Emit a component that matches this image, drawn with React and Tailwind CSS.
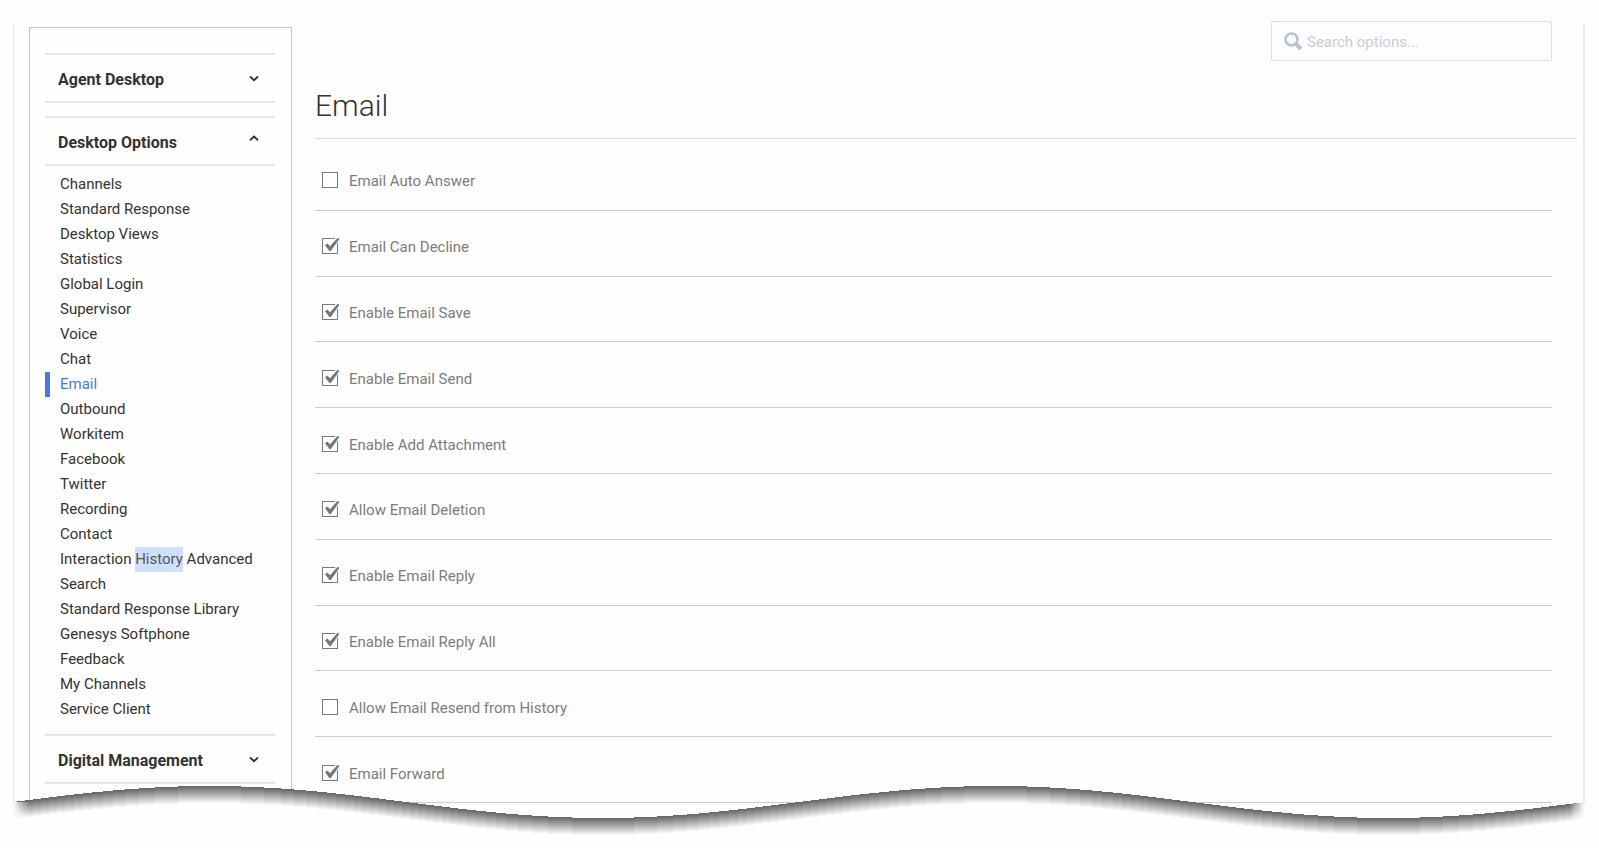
import React, { useState } from "react";

const sections = [
  { title: "Agent Desktop", items: [] },
  {
    title: "Desktop Options",
    items: [
      "Channels",
      "Standard Response",
      "Desktop Views",
      "Statistics",
      "Global Login",
      "Supervisor",
      "Voice",
      "Chat",
      "Email",
      "Outbound",
      "Workitem",
      "Facebook",
      "Twitter",
      "Recording",
      "Contact",
      "Interaction History Advanced Search",
      "Standard Response Library",
      "Genesys Softphone",
      "Feedback",
      "My Channels",
      "Service Client",
    ],
  },
  { title: "Digital Management", items: [] },
];

const emailOptions = [
  { label: "Email Auto Answer", checked: false },
  { label: "Email Can Decline", checked: true },
  { label: "Enable Email Save", checked: true },
  { label: "Enable Email Send", checked: true },
  { label: "Enable Add Attachment", checked: true },
  { label: "Allow Email Deletion", checked: true },
  { label: "Enable Email Reply", checked: true },
  { label: "Enable Email Reply All", checked: true },
  { label: "Allow Email Resend from History", checked: false },
  { label: "Email Forward", checked: true },
];

function Highlight({ text, word }) {
  if (!text.includes(word)) return text;
  return text.split(" ").map((part) => (
    <React.Fragment key={part}>
      {part === word ? (
        <mark className="inline-block bg-[#cfe0ff] align-top text-[#555]">{part}</mark>
      ) : (
        part
      )}{" "}
    </React.Fragment>
  ));
}

function Chevron({ up }) {
  return (
    <svg
      width="10"
      height="7"
      viewBox="0 0 10 7"
      fill="none"
      stroke="#333"
      strokeWidth="1.9"
      className={up ? "mb-[10px]" : "mb-1"}
    >
      <path d={up ? "M1 5.2 5 1.5 9 5.2" : "M1 1.5 5 5.2 9 1.5"} />
    </svg>
  );
}

function SidebarSection({ title, items, active, onSelect }) {
  const [open, setOpen] = useState(items.length > 0);

  return (
    <section>
      <button
        type="button"
        onClick={() => setOpen(!open)}
        aria-expanded={open}
        className="flex h-[50px] w-full items-center justify-between border-y-2 border-[#e2e7ef] pr-4 pl-[13px] pt-1 text-left text-base font-bold text-[#333]"
      >
        {title}
        <Chevron up={open} />
      </button>
      {open && items.length > 0 && (
        <ul className="-mb-px pt-[6px]">
          {items.map((item) => (
            <li key={item}>
              <a
                href="#"
                onClick={() => onSelect(item)}
                className={
                  item === active
                    ? "block border-l-[5px] border-[#4a79dd] pr-2 pl-[10px] text-[#4a79dd]"
                    : "block border-l-[5px] border-transparent pr-2 pl-[10px] text-[#333]"
                }
              >
                <Highlight text={item} word="History" />
              </a>
            </li>
          ))}
        </ul>
      )}
    </section>
  );
}

function OptionRow({ id, label, defaultChecked }) {
  const [checked, setChecked] = useState(defaultChecked);

  return (
    <div className="flex items-center border-b border-[#ccc] pl-[7px]">
      <span className="relative mt-[6px] h-4 w-[18px]">
        <input
          id={id}
          type="checkbox"
          checked={checked}
          onChange={(e) => setChecked(e.target.checked)}
          className="block h-4 w-4 appearance-none border border-[#7a7a7a] bg-white"
        />
        {checked && (
          <svg
            viewBox="0 0 18 16"
            className="pointer-events-none absolute inset-0 h-4 w-[18px]"
          >
            <path d="M13 0H17V5.5L15 5z" fill="#fefefe" />
            <path d="M3 7.2 5.4 5.4 8 8.2 15.4 0 17.6.8 8.8 13H7.4z" fill="#777" />
          </svg>
        )}
      </span>
      <label htmlFor={id} className="mt-[9px] pl-[9px] text-[#7c7c7c]">
        {label}
      </label>
    </div>
  );
}

// Torn bottom edge of the page with its drop shadow
const EDGE_WIDTH = 1572;
const SHADOW_DEPTH = 17;

function wave(offset) {
  const points = [];
  for (let x = 0; x <= EDGE_WIDTH; x += 4) {
    const y = 16 - 16 * Math.sin((x / EDGE_WIDTH) * Math.PI * 4) + offset;
    points.push(`${x} ${y.toFixed(2)}`);
  }
  return `M${points.join("L")}V62H0Z`;
}

function TornEdge() {
  const layers = Array.from({ length: SHADOW_DEPTH + 1 }, (_, i) => {
    const shade = Math.round(104 + (150 * i) / SHADOW_DEPTH);
    return { d: wave(i), fill: `rgb(${shade},${shade},${shade})` };
  });

  return (
    <svg
      viewBox={`0 0 ${EDGE_WIDTH} 62`}
      preserveAspectRatio="none"
      className="pointer-events-none absolute bottom-0 left-0 h-[62px] w-full"
      aria-hidden="true"
    >
      <defs>
        <linearGradient id="fadeLeft">
          <stop offset="0" stopColor="#fefefe" />
          <stop offset="1" stopColor="#fefefe" stopOpacity="0" />
        </linearGradient>
        <linearGradient id="fadeRight">
          <stop offset="0" stopColor="#fefefe" stopOpacity="0" />
          <stop offset="1" stopColor="#fefefe" />
        </linearGradient>
      </defs>
      {layers.map((layer, i) => (
        <path key={i} d={layer.d} fill={layer.fill} shapeRendering="crispEdges" />
      ))}
      <rect x="0" y="16" width="16" height="46" fill="url(#fadeLeft)" />
      <rect x="1556" y="16" width="16" height="46" fill="url(#fadeRight)" />
    </svg>
  );
}

export default function App() {
  const [active, setActive] = useState("Email");

  return (
    <div className="bg-[#fefefe] pr-[14px] pl-[13px] font-[Roboto,sans-serif] text-[15px] leading-[25px]">
      <div className="relative flex max-h-[848px] overflow-hidden pl-4">
        <div className="absolute top-6 bottom-[46px] left-0 w-px bg-[#e4e4e4]" />
        <div className="absolute top-6 right-0 bottom-[46px] w-[2px] bg-[#e9e9e9]" />

        <aside className="mt-[27px] w-[263px] shrink-0 border border-[#c8c8c8] pt-[25px] pr-4 pb-16 pl-[15px]">
          <nav className="flex flex-col gap-[13px]">
            {sections.map((section) => (
              <SidebarSection
                key={section.title}
                {...section}
                active={active}
                onSelect={setActive}
              />
            ))}
          </nav>
        </aside>

        <main className="min-w-0 grow pr-2 pl-[23px]">
          <div className="flex justify-end pt-[21px] pr-[25px]">
            <label className="flex h-10 w-[281px] items-center gap-1 rounded-xs border border-[#d9dfea] bg-[#fdfdfd] pl-3">
              <svg width="19" height="19" viewBox="0 0 19 19" fill="none" stroke="#b9c3d3">
                <circle cx="7.5" cy="7.5" r="6" strokeWidth="2.7" />
                <path d="M11.5 11.5 17 17" strokeWidth="4" />
              </svg>
              <input
                type="text"
                aria-label="Search options"
                placeholder="Search options..."
                className="min-w-0 grow bg-transparent pt-[2px] text-[#333] outline-none placeholder:text-[#c5cedb]"
              />
            </label>
          </div>

          <h1 className="mt-[25px] border-b border-[#ddd] pb-3 text-3xl leading-10 font-light text-[#333]">
            Email
          </h1>

          <div className="mt-[6px] mr-[25px] grid h-[658px] grid-rows-10">
            {emailOptions.map((option, index) => (
              <OptionRow
                key={option.label}
                id={`email-option-${index}`}
                label={option.label}
                defaultChecked={option.checked}
              />
            ))}
          </div>
        </main>

        <TornEdge />
      </div>
    </div>
  );
}
